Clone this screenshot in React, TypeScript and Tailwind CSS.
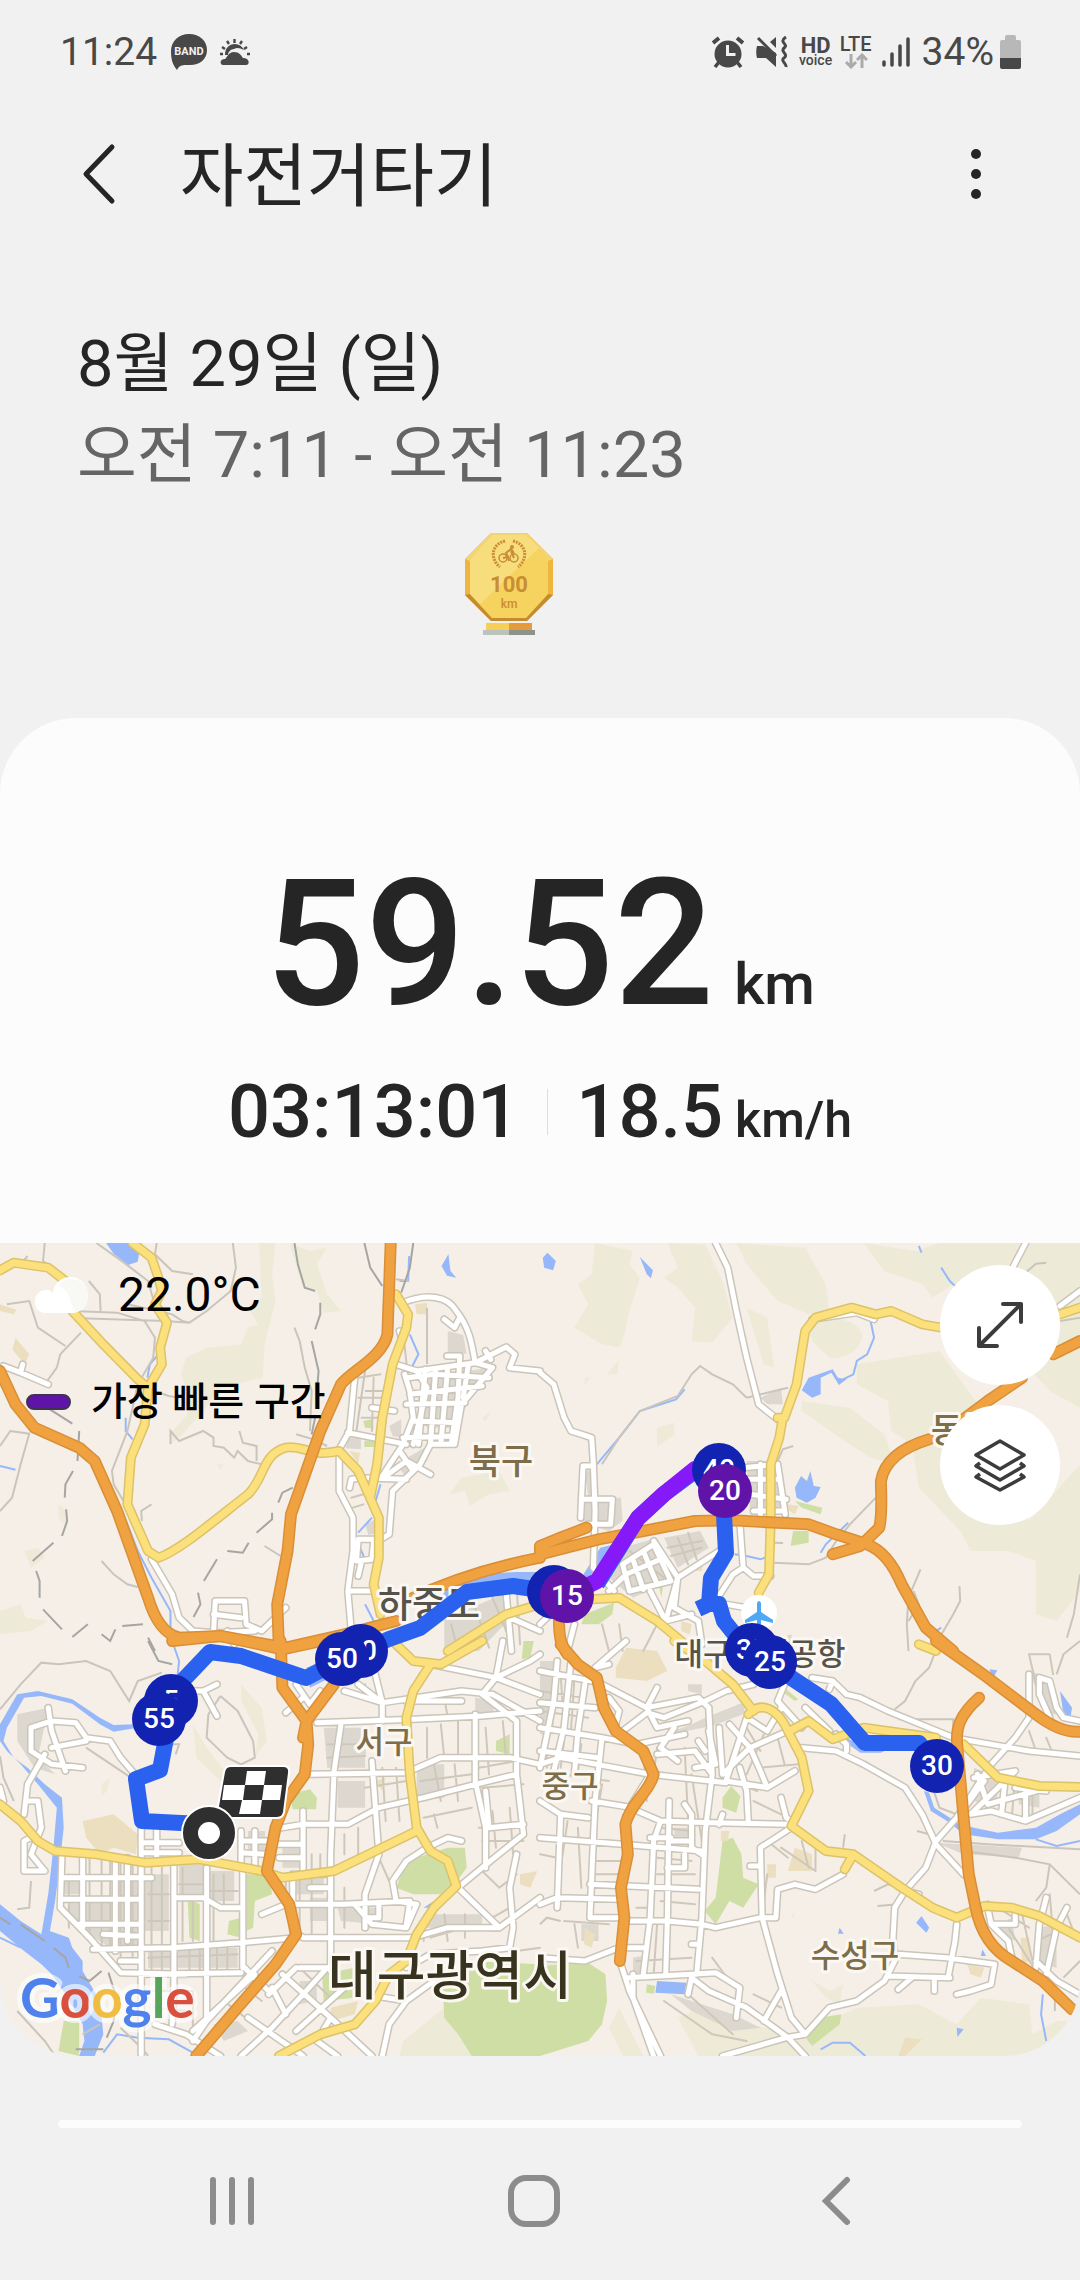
import { useState } from 'react';

type Tile = {
  id: string;
  transform: string;
  hills: string;
  parks: string;
  blocks: string;
  sand: string;
  water: string;
  streams: string;
  trails: string;
  lanes: string;
  streets: string;
  arterials: string;
  highways: string;
  borders: string;
};

const BLUE = '#1223b1';
const PURPLE = '#5f13a8';

// Map geometry, one entry per tile
const tiles: Tile[] = [
  {
    id: 'nw',
    transform: 'translate(0 -12) scale(0.34439 0.33333)',
    hills:
      'M752 36L800 36L790 130L800 210L770 330L762 440L640 470L590 540L530 610L495 640L500 600L545 550L550 490L525 430L540 380L600 350L700 340L720 290L750 280L720 230L760 200Z M840 36L900 60L950 50L920 100L950 190L990 240L940 245L920 180L880 170Z M1340 740L1450 720L1480 780L1420 790L1365 825L1350 780L1305 790Z M70 960L110 950L130 980L90 1010Z M0 1140L60 1120L75 1160L140 1170L90 1200L0 1210Z M170 820L195 840L195 890L170 860Z M1400 560L1428 540L1410 572Z M630 700L650 700L640 716Z',
    parks: 'M1055 570L1080 565L1085 592L1060 590Z M1058 630L1090 626L1090 648L1058 648Z M1340 468L1358 465L1358 486L1342 488Z',
    blocks:
      'M1300 300L1345 312L1355 368L1300 362Z M1230 440L1420 410L1370 480L1330 590L1240 590L1210 520Z M1010 620L1048 620L1048 655L1004 652Z M1130 585L1165 565L1165 620L1140 615Z M1060 880L1100 860L1100 905L1070 912Z M1150 700L1250 640L1240 690L1180 740Z M1290 1165L1460 1090L1475 1170L1390 1260L1290 1260Z M1370 385L1430 378L1420 402L1380 404Z',
    sand: 'M0 220L48 236L40 250L0 240Z M45 320L85 370L72 400L36 356Z M1205 220L1240 215L1240 250L1210 250Z M1015 660L1045 665L1040 700Z M1180 1095L1225 1090L1220 1120L1185 1125Z',
    water:
      'M308 36L390 36L405 60L400 92L372 102L330 68Z M1302 70L1308 120L1325 140L1298 134L1282 105Z M1230 1090C1330 1035 1450 1018 1568 1024L1568 1060L1400 1060L1290 1120Z',
    streams:
      'M460 370L435 400L428 440M365 560L365 600L385 625M0 705L45 716M355 840L400 960L440 1040L495 1140L495 1190M1188 75L1185 150L1160 150M1190 310L1215 370L1190 420M1105 760L1085 830M1080 860L1040 905M1045 950L1062 990M1060 1120L1085 1170',
    trails:
      'M130 36L125 90L165 120L210 150M455 36L450 70L500 120L560 130M676 36L685 110L670 180L600 240L550 275L530 270L500 250L370 220M235 262L480 270L550 275M210 240L340 245L420 270L450 320L445 380L400 460L370 600L325 720L330 760L370 830M20 220L85 210L110 290L190 345M235 305L175 370L165 410L130 460M280 36L360 95L430 150L460 260M258 150L290 190L292 240M0 645L30 600L85 608L60 700L35 800L0 840M495 640L495 600L520 630L590 600L620 620L620 645L650 650L680 680L690 660L720 690L760 700M695 600L705 635L745 645L745 690M420 470L490 495L520 500M855 290L870 330L885 410L905 480L900 600M295 990L330 1030L370 1060L400 1068M768 945L815 975M412 870L410 840L440 820M1240 230L1240 400M1060 420L1035 600M1060 480L1120 480M860 610L910 625L950 645M1186 150L1150 145M0 120L60 100L80 75',
    lanes:
      'M1040 440L1105 430M1040 500L1110 500M1050 560L1110 560M1085 440L1080 600M1020 800L1055 790M1025 830L1055 820M1170 300L1185 440M1500 1060L1510 1240M1380 1130L1420 1250M1310 1180L1330 1260M1430 1100L1470 1200',
    streets:
      'M10 405L60 425L140 460M60 425L66 400M1170 215C1240 185 1300 195 1325 240C1370 300 1370 350 1380 395L1470 348L1495 370L1480 410L1568 420M1380 395L1430 410L1340 520L1320 640L1250 640L1220 700L1140 780L1130 910L1105 925L1040 925M1150 400L1210 420L1380 395M1290 265L1320 290L1335 260M1410 360L1425 385M1175 430L1190 480L1200 560L1170 640L1110 735M1210 420L1240 470L1220 560L1200 640M1190 490L1400 465M1180 520L1350 515M1200 570L1330 575M1170 620L1320 615M1235 415L1215 640M1265 415L1250 640M1300 410L1280 640M1298 375L1335 375L1330 500L1310 640M1360 400L1345 500M1185 440L1260 430L1420 440M1030 440L1015 600L985 655L985 780L1025 860L1025 960L1010 1080L1020 1200M1010 605L1180 640M1080 530L1145 540M1040 740L1180 745M1120 735L1180 690L1250 730M1160 660L1200 720M1040 925L1035 990L1080 985L1085 930M1010 1080L1080 1080M1055 740L1020 745L1015 770M440 985L500 1090L520 1160L560 1200M560 1200L620 1205L625 1110L710 1110L715 1180L760 1200L830 1130M620 1150L700 1160M625 1205L740 1200M660 1200L680 1240M1050 990L1040 1035M1160 300L1165 320M1470 1090L1485 1260M1480 1160L1568 1200',
    arterials:
      'M0 118L40 95L140 110L190 150L210 240L300 340L400 445L430 470M385 36L440 80L460 140L470 180L450 220L485 275L465 350L470 400L430 470L420 580L380 680L370 820L430 960L460 980C520 960 620 870 720 790C770 740 760 670 830 650C880 640 900 680 985 660L1040 720L1100 860L1100 980L1085 1060L1105 1150M1150 190L1185 250L1180 290L1140 400L1110 560L1095 700L1075 800M1568 1120L1470 1150L1300 1260',
    highways:
      'M1135 20L1125 310C1110 380 1020 420 990 460L930 600L845 850L835 960L805 1120L810 1250M0 420L45 520L100 590L230 650L275 690L340 840L430 1100C450 1170 480 1210 520 1220L640 1215L830 1250L1000 1210L1150 1170M1180 1110C1300 1050 1420 1010 1568 980',
    borders:
      'M855 36L865 100L885 170L915 180M930 215L930 250L915 295M905 330L925 420L922 460M915 560L905 610M1058 36L1075 110L1110 165M1200 36L1190 110L1165 185M230 600L225 690M212 720L190 760L188 800M192 835L195 870L180 915M155 935L95 990M105 1020L115 1050L115 1100M125 1135L180 1195M210 1218L255 1180M295 1210L320 1230L335 1195M355 1185L415 1180M850 770L820 785L808 815M790 845L790 865L745 905M722 935L705 965L660 960M630 985L592 1050M575 1085L582 1120L562 1158M145 535L210 578M430 1220L450 1260',
  },
  {
    id: 'ne',
    transform: 'translate(540 -12) scale(0.34439 0.33333)',
    hills:
      'M160 36L270 60L260 100L290 140L260 240L245 310L230 350L180 340L100 290L140 220L110 160L150 130Z M370 36L480 40L530 150L560 260L500 335L440 330L450 230L400 170L360 140L400 110Z M570 36L770 50L830 160L840 240L780 250L690 210L600 100Z M770 270C830 250 920 260 935 310C940 360 870 390 840 380L790 330Z M600 230L660 260L680 410L650 400L620 300Z M760 510L900 530L1000 610L1030 700L960 680L870 620L760 540Z M920 400L1160 360L1300 560L1420 870L1568 700L1568 1080L1500 1170L1440 1150L1440 990L1360 960L1250 960L1220 900L1100 770L1080 640L1020 600L1010 510L920 460Z M940 36L1090 60L1160 36L1568 36L1568 530L1480 480L1200 160L1140 200L1110 160L1000 120Z M340 590L390 575L390 610L340 648Z M195 430L230 385L225 430Z M130 440L145 440L130 466Z',
    parks: 'M740 810L820 830L815 850L760 830Z M735 900L780 900L780 935L728 945Z M130 1150L215 1115L210 1150L170 1180L120 1180Z M345 1060L358 1060L352 1100Z',
    blocks:
      'M130 720L160 715L165 800L140 800Z M110 800L235 800L240 870L200 900L110 870Z M360 920L465 900L490 950L400 1010Z M240 950L340 920L400 1040L270 1100L200 1040Z M600 690L690 690L715 840L610 850Z M640 500L700 470L705 520L660 520Z M700 1220L730 1210L735 1260L700 1260Z',
    sand: 'M718 820L752 824L740 850L715 835Z M440 1000L475 990L470 1020L440 1020Z M410 1170L440 1180L435 1210L410 1200Z',
    water:
      'M8 80L22 65L46 90L38 118L12 110Z M290 78L328 118L322 142L310 130Z M780 440L850 415L865 440L890 445L868 462L846 425L815 440L815 490L790 500L760 478Z M740 770L758 735L775 750L785 720L795 765L815 768L800 800L775 815L745 800Z M175 950L215 940L200 975L140 1040L120 1040Z',
    streams:
      'M960 270L970 320L950 370L920 390L910 430L880 445M420 475L395 505L290 540L230 620L165 700M1165 110L1190 150L1205 165M1100 45L1108 65M895 875L830 940L815 965M565 970L600 975L640 985L680 970',
    trails:
      'M0 430M600 500L560 460L500 430L465 405L440 430L400 495L290 540L230 620L180 700M600 500L720 470M690 690L705 655L735 645M975 800L900 880L860 930L830 980L780 1000L680 995M1070 1260L1065 1180L1070 1100L1105 1015M1070 1170L1100 1120L1085 1080M1568 1030L1550 1150L1530 1220M1160 1220L1200 1150L1220 1110L1218 1065M680 935L706 936M1405 130L1440 98L1470 95M1510 270L1568 260',
    lanes:
      'M370 950L470 930M380 975L470 950M400 920L430 1000M430 905L455 985M260 960L360 1040M250 1040L350 990M180 1180L200 1260M230 1180L240 1260M340 1180L300 1260',
    streets:
      'M510 36L545 110L570 240L600 380L635 520L690 565M0 425L40 460L70 560L90 600L150 620L155 700L160 840L155 1010L215 1080M125 705L155 705M125 705L118 860M120 805L210 805L205 880L140 880M590 710L690 700M600 745L690 745M610 790L715 805M620 840L700 840M640 700L640 850M690 700L712 850M580 870L590 1010L560 1030L510 1110M590 1010L620 1035L670 1035M240 1000L330 940L380 1050L260 1080L240 1000M270 985L300 1075M300 960L340 1060M250 1030L350 985M330 930L400 1040L520 960M400 1040L390 1130L460 1170L470 1240M200 1080L240 1040M320 1080L365 1170L400 1040M365 1170L440 1150M540 1120L600 1130M100 1180L80 1260M0 1180L60 1120M1375 105L1410 36M1510 225L1568 180M790 265L920 245L970 265',
    arterials:
      'M150 1105L230 1100L340 1170L410 1230L440 1260M690 560L710 560L745 460L770 300L800 260L905 230L975 250L1020 240L1110 280L1165 290M705 560L695 620L670 700L670 860L665 1030L635 1085M1510 250L1568 230M1150 1260L1100 1240',
    highways:
      'M0 970L170 925L300 900L450 870L560 868L780 880L860 910L950 940C1000 960 1030 1010 1050 1060L1120 1190L1200 1260M0 945L60 920L135 890M0 980L0 945M850 970L930 945L985 890C995 850 990 790 990 750C1000 690 1050 650 1130 625M1210 580L1300 510L1400 440M1490 370L1568 330M55 1160C55 1220 60 1240 80 1270',
    borders: '',
  },
  {
    id: 'sw',
    transform: 'translate(0 398) scale(0.34439 0.33333)',
    hills:
      'M700 130L760 200L775 300L740 350L750 280L700 180Z M560 250L600 320L660 400L640 420L570 350Z M1290 1100L1170 1200L1160 1245L1568 1245L1568 1000Z M295 430L320 410L310 450L295 466Z',
    parks:
      'M1285 1020L1360 960L1568 970L1568 1245L1370 1245L1330 1180L1290 1130Z M1180 660L1300 620L1350 620L1355 680L1300 760L1200 760L1150 740Z M715 700L780 700L790 760L740 780L735 860L715 870Z M545 770L580 790L580 900L550 890Z M840 460L900 445L920 470L918 505L850 505Z M665 840L700 830L700 890L660 880Z M935 1000L1030 980L1030 1070L940 1080Z M185 1140L230 1140L230 1245L170 1230Z M1440 300L1480 280L1480 340L1440 330Z M1015 325L1062 325L1062 345L1015 345Z M1520 0L1550 0L1540 50L1515 55Z',
    blocks:
      'M50 220L140 200L110 350L160 400L100 380L50 300Z M180 700L230 700L230 760L180 760Z M340 720L400 720L400 770L340 770Z M420 700L490 700L490 870L420 870Z M520 670L590 670L590 760L520 760Z M610 690L680 690L680 780L610 780Z M430 930L690 920L690 980L430 980Z M200 780L400 780L400 920L320 920L200 840Z M720 570L770 570L770 630L720 630Z M820 600L880 600L880 680L820 680Z M940 260L1060 260L1060 380L950 380Z M900 770L950 770L950 840L900 840Z M980 800L1100 800L1100 850L990 840Z M1210 370L1290 370L1290 470L1210 480Z M620 1150L690 1140L720 1170L650 1200Z M870 1020L920 1020L920 1080L870 1090Z M980 420L1060 420L1060 500L980 500Z M1380 170L1440 180L1430 220L1380 215Z M1230 820L1400 820L1400 860L1230 860Z M860 700L940 700L940 760L860 760Z',
    sand: 'M240 540L330 520L400 580L395 640L330 620L290 640L250 590Z M960 1100L1040 1080L1030 1120L960 1140Z M1510 700L1560 690L1540 740L1510 730Z M1090 420L1120 410L1110 450Z',
    water:
      'M0 300L0 250L50 160L110 150L210 175L290 230L330 252L390 250L390 262L330 272L290 250L210 188L120 165L70 170L20 260L10 300L40 350L80 380L130 430L180 470L185 560L170 700L160 780L145 870L200 890L210 920L240 960L240 990L290 1080L300 1180L275 1245L230 1245L245 1200L240 1150L190 1060L150 1000L120 970L70 930L0 870L0 790L60 840L120 880L140 760L155 620L165 500L110 430L60 370L20 330Z M1230 800L1260 780L1262 800Z M1000 30L1040 70L900 140L890 80Z',
    streams: 'M0 890L60 920M500 0L520 60L515 110M300 1235L340 1180L400 1190L490 1195L560 1235M635 1100L570 1180',
    trails:
      'M0 205L60 130L120 65L170 70L250 60L320 90L375 180L400 120L470 95M640 165L605 220L600 290L660 350L700 370L740 350L735 300L690 210L640 165M0 345L10 410L40 480M250 320L380 410M510 340L520 310L500 310M90 720L85 800L50 805M350 1160L410 1220L430 1245M50 1110L130 1200L160 1245M240 1180L290 1150',
    lanes:
      'M200 700L200 860M260 650L260 900M295 650L295 920M320 650L320 920M350 650L350 960M385 650L385 960M440 680L440 1000M470 680L470 1000M530 680L530 900M560 780L560 900M620 700L620 900M650 700L650 790M430 760L490 760M430 840L490 840M520 730L590 730M610 750L690 750M430 950L690 940M550 930L550 990M580 930L580 990M630 920L630 990M660 920L660 990M830 700L830 800M870 720L870 880M905 640L905 880M930 640L930 700M950 310L1060 310M950 350L1060 345M1110 380L1120 540M1150 380L1160 540M1060 440L1180 420M1220 420L1370 400M1260 370L1280 480M1320 370L1330 480M1230 530L1370 500M1260 520L1270 560M1000 580L1000 640M1040 560L1040 640M1070 800L1070 850M1000 740L1000 860M1100 650L1130 720M1240 260L1240 350M1280 250L1290 350M1330 240L1330 350M1410 260L1420 400M1460 240L1470 360M1390 380L1500 360M1400 440L1520 430M1430 510L1440 620M1480 500L1490 640M1390 560L1520 560M1400 600L1520 600M1290 170L1300 230M1060 130L1060 170M1230 840L1230 900M1290 820L1300 900M1350 820L1350 890M1400 690L1450 740L1500 700M1430 830L1480 800M1500 930L1568 920M1250 890L1350 860L1450 870M700 1030L760 1080M650 1080L750 1160M820 1000L930 1110M870 980L960 1070M560 1050L560 1170M600 1000L600 1100M440 1050L560 1050M450 1100L540 1110',
    streets:
      'M90 260L150 240L220 245L250 290L320 300L350 350L400 410M90 260L90 330L150 370L240 380M140 200L150 270L190 390M150 320L250 300M130 340L80 430L70 520M75 480L110 480L120 560L90 640L130 690L70 690L70 600L110 580M0 440L10 480M560 150L590 150L630 225M590 150L630 130M180 640L175 800L260 890L350 995L540 1000M240 640L240 860M335 650L335 930M370 650L370 900M410 560L410 1240M455 560L455 660M410 605L520 605M410 635L520 635M505 660L505 1040L500 1150M600 680L600 1140M705 690L705 980M185 710L440 710M180 775L410 775M230 850L410 850M300 880L400 885M270 925L500 920L700 905L860 890M350 960L410 960M510 770L590 770L640 800L705 800M410 1000L700 995M700 600L780 600M700 635L770 640M700 570L700 660M740 570L740 670M760 820L830 790L1000 790L1190 780L1180 850M850 800L850 870L880 890L1200 890L1300 860L1450 860L1568 770M870 980L950 980M850 700L850 790M880 510L880 700M820 560L880 550L1010 550L1100 500L1230 470L1380 430L1500 400M800 610L880 610M810 650L880 650M960 640L960 990M900 740L960 740M990 250L970 390L960 640M860 700L960 700M900 400L1180 395L1280 350L1480 350L1568 370M920 245L1200 235L1400 225L1568 210M1080 360L1090 500L1100 640L1060 760L1060 860M1060 830L1100 830L1100 790M1030 790L1080 850L1180 860L1210 790L1150 780L1140 720L1180 660L1240 620L1300 590L1340 600M1040 130L1110 185L1340 150L1430 160L1568 240M1080 60L1110 185L1110 240M1000 150L1110 185M1250 70L1440 110L1400 160L1500 240L1500 400L1520 580L1400 680L1330 740L1450 860M1440 110L1540 60L1568 40M1380 220L1380 420L1410 560L1410 680M1500 640L1480 740L1490 860L1480 920L1400 930L1250 940L1180 980M1460 0L1440 110L1568 160M1410 450L1420 560L1520 550M860 130L900 190L930 150M830 215L880 170M790 930L700 1030L600 1140L560 1200M740 1000L560 1170M820 1000L960 1130L1080 1245M950 980L880 1060L790 1160L700 1245M780 1060L860 980M860 1170L1000 1040M720 1130L880 1245M830 1120L790 1040M960 1130L920 1200L980 1245M1060 1060L1180 1080L1130 1150L1110 1245M1180 1080L1260 1020M1180 180L1340 180M450 1150L540 1180L640 1245M710 980L780 1050',
    arterials:
      'M1150 10L1200 60L1280 70L1400 0M1250 70L1200 150L1180 230L1190 400L1210 560L1250 630L1300 660L1325 735L1260 800L1210 880L1180 960L1130 1000L1090 1080L1030 1150L930 1180L810 1245M0 490L60 540L110 600L160 630L280 640L420 665L580 655L760 690L820 710L970 690L1210 570',
    highways:
      'M500 0L640 -15L820 25L1000 -15M815 0L820 140L890 240L895 310L885 400L830 480L800 560L775 690L840 790L860 880L800 970L690 1100L570 1245M970 130L890 240L880 290',
    borders: 'M0 830L30 850M60 850L130 900M155 920L190 950L200 980M230 1005L260 1020L295 990M315 995L335 1060M335 1090L330 1140L310 1190M220 1225L300 1225M430 0L460 60L500 70',
  },
  {
    id: 'se',
    transform: 'translate(540 398) scale(0.34439 0.33333)',
    hills:
      'M400 1130L470 1100L600 1150L760 1180L920 1100L1100 1090L1210 1150L1280 1070L1420 1090L1430 1180L1500 1140L1568 1140L1568 1245L240 1245L200 1160L230 1100L300 1245L460 1245Z M0 960L60 960L0 1020Z M785 1015L840 1050L880 1030L870 1090L830 1070Z M730 820L740 815L735 835Z',
    parks:
      'M0 975L140 965L190 1000L195 1080L180 1150L140 1200L0 1245Z M530 470L555 435L582 465L570 515L530 500Z M530 600L560 590L585 640L590 710L635 730L590 800L550 780L510 850L478 810L510 770Z M810 1130L875 1120L870 1150L790 1215L775 1195Z M710 140L750 175L740 180L700 150Z M310 1030L335 1035L330 1058L308 1055Z',
    blocks:
      'M380 1060L440 1080L560 1120L640 1160L560 1170L440 1110Z M270 950L295 945L290 1005L270 1005Z M480 230L600 180L590 220L500 255L350 285L440 250Z M1150 605L1400 620L1390 650L1230 640Z M1260 380L1340 410L1320 500L1260 480Z M1330 850L1370 830L1380 900L1340 880Z M1450 860L1500 850L1500 980L1450 970Z M0 60L40 60L40 280L0 280Z M1420 90L1480 110L1500 220L1470 220Z M120 850L170 850L170 900L120 900Z M430 130L470 130L470 160L430 150Z M1390 440L1450 440L1450 500L1390 490Z M390 560L430 560L430 610L390 610Z',
    sand: 'M220 80L250 20L340 30L370 90L310 120L220 110Z M740 620L790 640L790 690L720 690Z M1060 1190L1110 1195L1060 1245L1040 1245Z M525 570L550 570L545 600L525 600Z M1240 970L1290 980L1280 1010L1250 1000Z M130 860L160 880L150 920L128 910Z M1395 890L1420 890L1425 960L1400 970Z M660 670L685 670L685 710L660 710Z',
    water:
      'M340 1020L425 1025L420 1060L335 1055Z M1108 825L1130 860L1122 875L1092 845Z M870 860L882 878L865 878Z M1210 1160L1230 1165L1212 1188Z M1510 150L1545 200L1540 230L1520 220Z M1305 85L1328 88L1315 112Z M1115 450L1130 455L1145 500L1190 530L1210 545L1260 560L1330 575L1440 560L1510 520L1568 490L1568 520L1500 570L1440 595L1330 595L1230 580L1190 545L1135 510Z M890 290L960 330L1010 325L990 335L930 335L895 310Z M830 195L880 240L900 270L850 225Z M1285 925L1295 945L1280 945Z',
    streams: 'M815 1225L850 1205L900 1205L945 1245M1440 595L1500 615L1568 600M1460 1060L1455 1120L1470 1200M1150 -30L1165 -40',
    trails:
      'M1160 0L1130 80L1090 120L1060 180L1030 205M1568 760L1480 670L1380 650L1230 630M1170 600L1300 610L1568 625M1480 670L1470 740L1440 780M1568 0L1520 40L1500 100M880 620L885 580M970 750L1010 730L1050 740M980 795L1040 790M1095 570L1130 580M1495 1060L1495 1110M1520 1010L1568 960M1040 235L1200 235L1200 290M1140 440L1160 500L1210 520M0 850L20 830L60 840',
    lanes:
      'M60 100L70 260M100 110L90 270M0 150L130 170M0 210L140 230M20 310L20 380M70 300L60 380M120 310L110 390M60 400L200 420M180 430L160 560M80 540L60 680M110 560L120 740M0 640L50 650M160 660L240 660M160 700L240 700M70 840L200 850M100 850L110 920M300 330L310 480M340 320L330 400M420 320L430 540M440 400L470 600M340 650L440 660M340 700L450 700M350 560L440 570M350 780L450 790M280 800L330 800M280 960L440 950M340 850L330 1000M560 420L630 450M600 260L640 330M650 280L600 400M690 290L710 370M640 380L750 370M620 480L700 520M660 600L720 650M700 620L800 690L800 620M760 600L780 680M660 700L650 780M360 1080L500 1180L600 1200M430 1060L560 1180M620 1060L700 1100M500 950L550 1020M1420 40L1440 130M1420 40L1480 40L1490 100M1300 780L1420 860M1360 860L1440 990M1400 820L1430 960M1480 760L1490 880M1530 820L1560 900M1440 900L1530 860M1250 600L1250 660M1380 400L1370 530M1430 430L1430 520M1470 290L1490 340M1420 270L1440 330',
    streets:
      'M0 90L150 120M0 185L160 200M0 260L180 290L280 310L420 280M50 60L40 180L0 380M90 60L70 260L40 390M130 130L110 270L100 400M0 370L60 350L320 400L540 425M0 330L170 350M180 290L160 480L145 830L230 830M0 480L60 520L50 800M60 520L140 530M0 590L240 610L470 630M145 730L460 745M0 790L50 770L230 775M150 480L270 500M320 400L260 500L350 540L500 545L720 550M350 540L330 600L320 830L300 1000M375 480L370 830L365 1000M420 490L440 520L440 620L470 640M490 200L500 400L480 570L470 830L455 1000M320 590L380 590M370 680L420 680L420 640M380 600L430 600M240 840L370 840L470 850L510 860L640 830L685 830L690 745L740 730L800 745L880 700M645 830L640 620L730 560M610 675L640 675M645 830L690 1000L730 1130L770 1180L715 1190L530 1245M240 270L310 215L360 230L480 180L540 150L620 130M200 70L160 80L250 0M180 130L310 200L460 170L490 200M310 200L340 140M200 170L230 210L220 250M310 200L340 260L430 240M390 260L350 320L400 360M340 340L450 330L500 400M520 260L530 400L610 320L640 390L660 440M490 270L510 370L450 380M550 250L610 320L720 270M460 300L480 330M540 420L600 230L660 270L700 200M580 380L600 450L605 545M540 420L660 440L740 390M700 470L715 530L730 540M530 520L520 550M760 320L860 330L940 370L1060 440L1110 520L1150 610L1230 700M860 280L890 310L890 330M710 130L690 180L760 260M770 200L840 270M790 110L850 120L890 160L930 170L1010 210L1200 290L1420 330L1568 345M850 120L840 145M1420 100L1420 230L1380 290L1310 370L1210 530L1150 600L1120 680L1060 750L1030 800L1025 890L1030 960L1000 1020L920 1080L840 1100L770 1180M1060 750L1100 760M1450 110L1480 120L1500 200L1520 230L1568 240M1450 110L1450 160L1480 230M1260 410L1380 390L1250 520L1310 510L1410 540L1568 470M1270 400L1300 490L1440 450M1290 420L1240 490M1350 420L1340 520M1410 440L1410 530M1380 440L1470 450M1210 850L1205 900L1185 1010M1040 940L1180 950L1320 970L1310 1030L1250 1050L1210 1060M1010 1005L1190 1010M1145 1010L1145 1050M1080 1010L1040 1045M1300 800L1310 850L1360 900L1370 950M1310 850L1380 850L1380 820M1470 770L1450 850L1440 980M1530 800L1500 860L1470 1000M1440 960L1500 1020L1568 1060M0 950L130 960L230 920L300 920M250 1010L440 1000L510 995L580 1040L570 1130M430 1060L440 1010L490 1050L600 1100L720 1190L770 1245M650 1140L700 1050M235 970L260 1050L350 1245M270 1000L270 1070L330 1245M440 910L460 910',
    arterials:
      'M390 0L480 60L560 130L620 210M605 220C640 180 690 200 720 270L760 350L780 450L730 555L830 630L910 640L1050 740L1140 800L1210 830L1290 795L1370 800L1450 825L1568 890M725 270L780 240L850 295L940 260L1150 290M1230 310L1330 410L1450 435L1568 438M910 640L885 685',
    highways:
      'M60 10L110 70L165 110L185 200L220 270L300 330L330 400C320 450 260 490 248 550L255 640L235 740L245 830L232 960M1150 0L1300 110L1440 220C1490 260 1530 275 1568 272M1275 170C1220 220 1205 260 1212 320L1230 530L1245 700L1265 800C1280 880 1320 930 1370 960L1460 1020L1545 1105',
    borders: '',
  },
];

const districtLabels = [
  { text: '북구', x: 501, y: 231, size: 35, color: '#7d6d49' },
  { text: '동구', x: 963, y: 200, size: 35, color: '#7d6d49' },
  { text: '하중도', x: 429, y: 375, size: 37, color: '#57524a' },
  { text: '대구국제공항', x: 760, y: 422, size: 31, color: '#57524a' },
  { text: '서구', x: 384, y: 510, size: 31, color: '#7d6d49' },
  { text: '중구', x: 570, y: 554, size: 31, color: '#7d6d49' },
  { text: '수성구', x: 855, y: 724, size: 32, color: '#7d6d49' },
  { text: '대구광역시', x: 450, y: 752, size: 53, color: '#38331f' },
];

// The marker without a distance is covered by the 15 km one
const distancePins = [
  { km: '5', x: 171, y: 458, color: BLUE },
  { km: '55', x: 159, y: 476, color: BLUE },
  { km: '10', x: 361, y: 408, color: BLUE },
  { km: '50', x: 342, y: 416, color: BLUE },
  { km: '', x: 554, y: 349, color: BLUE },
  { km: '15', x: 567, y: 353, color: PURPLE },
  { km: '40', x: 719, y: 227, color: BLUE },
  { km: '20', x: 725, y: 248, color: PURPLE },
  { km: '35', x: 752, y: 407, color: BLUE },
  { km: '25', x: 770, y: 419, color: BLUE },
  { km: '30', x: 937, y: 523, color: BLUE },
];

const logoLetters = [
  { char: 'G', color: '#4f82ec' },
  { char: 'o', color: '#d9503f' },
  { char: 'o', color: '#f0bc42' },
  { char: 'g', color: '#4f82ec' },
  { char: 'l', color: '#55a65a' },
  { char: 'e', color: '#d9503f' },
];

const roadLayers = [
  { key: 'lanes', casing: '#cfc8ba', fill: '#cfc8ba', outer: 2, inner: 0 },
  { key: 'streets', casing: '#cbc5b9', fill: '#ffffff', outer: 8, inner: 5 },
  { key: 'arterials', casing: '#dcc26a', fill: '#fbe07b', outer: 10, inner: 7 },
  { key: 'highways', casing: '#d98f37', fill: '#f0a140', outer: 12, inner: 9 },
] as const;

function StatusBar() {
  return (
    <header className="flex h-[104px] items-center justify-between pl-15 pr-[59px] text-[#484848]">
      <div className="flex items-center">
        <span className="text-[39px] leading-none">11:24</span>
        <svg className="ml-3.5 size-9" viewBox="0 0 36 36" aria-label="BAND">
          <path d="M18 0c11 0 18 7 18 16 0 9-7 15-17 15-6 0-10-1-13 5C1 30 0 24 0 17 0 7 8 0 18 0Z" fill="currentColor" />
          <text x="18" y="21" textAnchor="middle" fontSize="11" fontWeight="700" fill="#f1f1f1">BAND</text>
        </svg>
        <svg className="ml-3 h-8 w-8" viewBox="0 0 32 32" fill="none" stroke="currentColor" strokeWidth="2.4" aria-label="날씨">
          <path d="M15.500 3v4M8 5l2 3M23 5l-2 3M3 11l3 2M28 11l-3 2M1 18h3M28 18h3" />
          <path d="M6 19c0-7 4-11 10-11 4 0 7 2 9 6-4-2-7-3-10-1-3 0-6 3-6 6Z" fill="currentColor" stroke="none" />
          <path d="M4 29c-3 0-4-6 2-6 2-1 3-7 9-7 5 0 7 3 9 6 7 0 7 7 3 7Z" fill="currentColor" stroke="none" />
        </svg>
      </div>

      <div className="flex items-center">
        <svg className="h-8 w-8" viewBox="0 0 32 32" fill="none" stroke="currentColor" aria-label="알람">
          <circle cx="16" cy="18" r="13.500" fill="currentColor" stroke="none" />
          <path d="M1 7l6-5M31 7l-6-5" strokeWidth="4" />
          <path d="M7 26l-4 5M25 26l4 5" strokeWidth="3.500" />
          <path d="M15.500 9v9.500h8" stroke="#f1f1f1" strokeWidth="3" />
        </svg>
        <svg className="ml-3 h-8 w-8" viewBox="0 0 32 32" fill="none" stroke="currentColor" aria-label="진동">
          <path d="M1 10h6l13 7v14L10 22H1c-1-3-1-9 0-12Z" fill="currentColor" stroke="none" />
          <path d="M14 6l6-5v11Z" fill="currentColor" stroke="none" />
          <path d="M2 2l18 18" strokeWidth="3" />
          <path d="M30 1c-8 5 2 7-1 10-6 5 3 6 0 10-6 4 2 6 1 10" strokeWidth="3" />
        </svg>
        <div className="ml-3 flex w-8 flex-col items-center">
          <span className="text-[22px] font-bold leading-[17px]">HD</span>
          <span className="text-[14px] font-medium leading-[13px]">voice</span>
        </div>
        <div className="ml-2 flex w-8 flex-col items-center">
          <span className="text-[20px] font-medium leading-[18px]">LTE</span>
          <svg className="h-4 w-6" viewBox="0 0 24 16" fill="none" stroke="#ababab" strokeWidth="3">
            <path d="M7 1v12M2 9l5 5 5-5M18 15V3M13 7l5-5 5 5" />
          </svg>
        </div>
        <svg className="ml-2 h-8 w-8" viewBox="0 0 32 32" fill="none" stroke="currentColor" strokeWidth="3.500" strokeLinecap="round" aria-label="신호">
          <path d="M4 26v3M12 18v11M20 10v19M28 3v26" />
        </svg>
        <span className="ml-2.5 text-[39px] leading-none">34%</span>
        <svg className="ml-1.5 h-[34px] w-[21px]" viewBox="0 0 21 34" aria-label="배터리">
          <path d="M5 5V2q0-2 2-2h7q2 0 2 2v3h3q2 0 2 2v17H0V7q0-2 2-2Z" fill="#b8b8b8" />
          <path d="M0 23h21v9q0 2-2 2H2q-2 0-2-2Z" fill="#484848" />
        </svg>
      </div>
    </header>
  );
}

function TitleBar() {
  return (
    <div className="flex h-[140px] items-center pl-[77px] pr-[99px]">
      <button type="button" aria-label="뒤로" className="text-[#252525]">
        <svg className="h-16 w-10" viewBox="0 0 40 64" fill="none" stroke="currentColor" strokeWidth="5" strokeLinecap="round" strokeLinejoin="round">
          <path d="M35 5L9 32l26 27" />
        </svg>
      </button>
      <h1 className="ml-[63px] pt-2 text-[69px] leading-[100px] text-[#252525]">자전거타기</h1>
      <button type="button" aria-label="더보기" className="ml-auto flex flex-col gap-[10px]">
        <span className="size-[10px] rounded-full bg-[#252525]" />
        <span className="size-[10px] rounded-full bg-[#252525]" />
        <span className="size-[10px] rounded-full bg-[#252525]" />
      </button>
    </div>
  );
}

function Medal() {
  return (
    <svg className="mx-auto h-[102px] w-[88px] shrink-0" viewBox="0 0 88 102" aria-label="100 km">
      <path d="M26 0h36l26 26v36L62 88H26L0 62V26Z" fill="#efb53f" />
      <path d="M26 0h36l26 26-5 2L61 2H27L5 28l-5-2Z" fill="#f3d377" />
      <path d="M0 62l26 26h36l26-26-5-1-22 24H27L5 61Z" fill="#c48c2c" />
      <path d="M27 2h34l22 25v34L61 85H27L5 61V27Z" fill="#f6d25f" />
      <path d="M27 2h34l13 13L15 71 5 61V27Z" fill="#f8dd7d" />
      <g fill="none" stroke="#c98d33" strokeWidth="1.500">
        <circle cx="38" cy="25" r="4" />
        <circle cx="49" cy="25" r="4" />
        <path d="M38 25l5-1 1 4M43 24l-2-4 5-4 3 4M49 25l-3-7" strokeWidth="2" />
        <path d="M40 8C27 11 24 25 35 34M48 8c13 3 16 17 5 26" strokeWidth="3" strokeDasharray="2 1" />
      </g>
      <circle cx="47" cy="14" r="2" fill="#c98d33" />
      <text x="44" y="59" textAnchor="middle" fontSize="22" fontWeight="700" fill="#c98d33">100</text>
      <text x="44" y="75" textAnchor="middle" fontSize="12" fontWeight="500" fill="#c98d33">km</text>
      <path d="M21 90h23v8H21Z" fill="#f5cf58" />
      <path d="M44 90h23v8H44Z" fill="#e59b3c" />
      <path d="M18 97h26v5H18Z" fill="#bcc3bd" />
      <path d="M44 97h26v5H44Z" fill="#8a938c" />
    </svg>
  );
}

function RouteMap() {
  return (
    <svg className="block h-auto w-full" viewBox="0 0 1080 813" fill="none" role="img" aria-label="운동 경로 지도">
      <rect width="1080" height="813" fill="#f5efe8" />
      {/* Land cover */}
      {tiles.map((tile) => (
        <g key={tile.id} transform={tile.transform}>
          <path d={tile.hills} fill="#edebd8" />
          <path d={tile.parks} fill="#cfdea5" />
          <path d={tile.blocks} fill="#dcd8cf" />
          <path d={tile.sand} fill="#ecdfc0" />
          <path d={tile.water} fill="#96b8fa" />
          <path d={tile.streams} stroke="#96b8fa" strokeWidth="2" vectorEffect="non-scaling-stroke" />
          <path d={tile.trails} stroke="#c9c5bc" strokeWidth="2" vectorEffect="non-scaling-stroke" />
          <path d={tile.borders} stroke="#a5a5a3" strokeWidth="2" vectorEffect="non-scaling-stroke" />
        </g>
      ))}
      {/* Roads, narrow to wide */}
      {roadLayers.map((layer) => (
        <g key={layer.key} strokeLinecap="round" strokeLinejoin="round">
          {tiles.map((tile) => (
            <path key={tile.id} d={tile[layer.key]} transform={tile.transform} stroke={layer.casing} strokeWidth={layer.outer} vectorEffect="non-scaling-stroke" />
          ))}
          {layer.inner > 0 && tiles.map((tile) => (
            <path key={tile.id} d={tile[layer.key]} transform={tile.transform} stroke={layer.fill} strokeWidth={layer.inner} vectorEffect="non-scaling-stroke" />
          ))}
        </g>
      ))}
      {/* Airport */}
      <circle cx="759" cy="370" r="18" fill="#ffffff" />
      <path d="M757 360q2-4 4 0v9l12 8v3l-12-3v8h-4v-8l-12 3v-3l12-8Z" fill="#4fa8f5" />
      {/* District names */}
      {districtLabels.map((label) => (
        <text
          key={label.text}
          x={label.x}
          y={label.y}
          textAnchor="middle"
          fontSize={label.size}
          fontWeight="500"
          fill={label.color}
          stroke="#fbf8f4"
          strokeWidth="6"
          strokeLinejoin="round"
          paintOrder="stroke"
        >
          {label.text}
        </text>
      ))}
      {/* Track */}
      <g strokeWidth="16" strokeLinejoin="round">
        <path d="M209 581L181 580L142 578L136 536L160 527L167 490L171 450L210 409L241 413L306 435L342 416L389 396L420 385L467 349L513 343L554 349M597 341L638 275L664 251L695 228L719 227" stroke="#2a62ef" />
        <path d="M724 248V271L726 310L711 335L709 361L698 366M708 361H719L724 378L736 393L770 419L793 436L831 461L865 500H919L937 523" stroke="#2a62ef" />
        <path d="M567 353L597 338L638 275L664 251L695 226L719 224" stroke="#8519f7" />
      </g>
      {/* Start and finish */}
      <path d="M231 523h52q7 0 6 7l-5 39q-1 6-7 6h-54q-7 0-6-6l7-40q1-6 7-6Z" fill="#2f2f2f" stroke="#ffffff" strokeWidth="2" />
      <path d="M247 528h19l-2 14h18l-2 15h-18l-2 14h-21l3-14h-20l2-15h21Z" fill="#ffffff" />
      <path d="M245 542h19l-2 15h-19Z" fill="#2f2f2f" />
      <circle cx="209" cy="590" r="27" fill="#2f2f2f" stroke="#ffffff" strokeWidth="2" />
      <circle cx="209" cy="590" r="11" fill="#ffffff" />
      {/* Distance pins */}
      {distancePins.map((pin) => (
        <g key={pin.km}>
          <circle cx={pin.x} cy={pin.y} r="27" fill={pin.color} />
          {pin.km && (
            <text x={pin.x} y={pin.y + 9} textAnchor="middle" fontSize="28" fontWeight="500" fill="#ffffff">
              {pin.km}
            </text>
          )}
        </g>
      ))}
      <text x="20" y="775" fontFamily="Lato, sans-serif" fontSize="55" fontWeight="700" stroke="#ffffff" strokeOpacity="0.6" strokeWidth="10" strokeLinejoin="round" paintOrder="stroke">
        {logoLetters.map((letter, idx) => (
          <tspan key={idx} fill={letter.color}>{letter.char}</tspan>
        ))}
      </text>
    </svg>
  );
}

function MapPanel() {
  const [expanded, setExpanded] = useState(false);

  return (
    <section className="relative overflow-hidden rounded-b-[76px]">
      <RouteMap />

      {/* Weather and legend */}
      <div className="absolute left-6 top-6 text-black">
        <div className="flex h-14 items-center">
          <svg className="ml-[10px] h-[38px] w-[56px]" viewBox="0 0 56 38" aria-label="흐림">
            <path d="M11 37C-2 37-3 16 11 14q4-1 8 3C21-4 53-5 54 19c0 10-6 18-16 18Z" fill="#ffffff" />
            <path d="M25 9C32-1 53 1 54 19c0 8-5 15-12 17C36 31 38 16 25 9Z" fill="#f8f8f5" />
          </svg>
          <span className="ml-7 text-[48px] leading-none">22.0°C</span>
        </div>
        <div className="mt-[51px] flex h-14 items-center">
          <span className="ml-[2px] h-4 w-[45px] rounded-full border-2 border-[#3d3350] bg-[#5f13a8]" />
          <span className="ml-5 text-[39px] font-medium leading-none">가장 빠른 구간</span>
        </div>
      </div>

      {/* Map controls */}
      <div className="absolute right-5 top-[22px] flex flex-col gap-5">
        <button
          type="button"
          aria-label="지도 확대"
          aria-pressed={expanded}
          onClick={() => setExpanded(!expanded)}
          className="grid size-[120px] place-items-center rounded-full bg-white text-[#3c3c3c]"
        >
          <svg className="size-12" viewBox="0 0 48 48" fill="none" stroke="currentColor" strokeWidth="4" strokeLinecap="round" strokeLinejoin="round">
            <path d="M27 3h18v18M21 45H3V27M45 3L3 45" />
          </svg>
        </button>
        <button type="button" aria-label="지도 유형" className="grid size-[120px] place-items-center rounded-full bg-white text-[#3c3c3c]">
          <svg className="h-[54px] w-[52px]" viewBox="0 0 52 54" fill="none" stroke="currentColor" strokeWidth="3.500" strokeLinejoin="round">
            <path d="M26 3l24 14-24 14L2 17Z" />
            <path d="M6 25l-4 3 24 14 24-14-4-3" />
            <path d="M6 36l-4 3 24 13 24-13-4-3" />
          </svg>
        </button>
      </div>
    </section>
  );
}

function NavBar() {
  return (
    <nav className="grid h-[146px] grid-cols-3 items-center pl-[81px] pr-[93px] text-[#8c8c8c]">
      <button type="button" aria-label="최근 앱" className="justify-self-center">
        <svg className="h-13 w-[46px]" viewBox="0 0 46 52" fill="none" stroke="currentColor" strokeWidth="6" strokeLinecap="round">
          <path d="M4 5v42M23 5v42M42 5v42" />
        </svg>
      </button>
      <button type="button" aria-label="홈" className="justify-self-center">
        <svg className="size-13" viewBox="0 0 52 52" fill="none" stroke="currentColor" strokeWidth="6">
          <rect x="3" y="3" width="46" height="46" rx="15" />
        </svg>
      </button>
      <button type="button" aria-label="뒤로 가기" className="justify-self-center">
        <svg className="h-13 w-8" viewBox="0 0 32 52" fill="none" stroke="currentColor" strokeWidth="6" strokeLinecap="round">
          <path d="M27 5L6 26l21 21" />
        </svg>
      </button>
    </nav>
  );
}

export default function App() {
  return (
    <div className="min-h-screen bg-[#f1f1f1] font-['Roboto','Noto_Sans_CJK_KR',sans-serif]">
      <StatusBar />
      <TitleBar />

      <main>
        {/* Date and reward */}
        <section className="px-[77px] pt-[75px] text-[65px] leading-[91px]">
          <p className="text-[#252525]">8월 29일 (일)</p>
          <p className="text-[#656565]">오전 7:11 - 오전 11:23</p>
        </section>
        <div className="mt-8 flex pr-[62px]">
          <Medal />
        </div>

        {/* Summary */}
        <section className="mt-[83px] flex flex-col items-center rounded-t-[76px] bg-[#fcfcfc] pb-[75px] pt-[114px] font-medium text-[#252525]">
          <div className="flex items-baseline gap-5">
            <span className="text-[176px] leading-[224px]">59.52</span>
            <span className="text-[58px]">km</span>
          </div>
          <div className="flex items-center">
            <span className="text-[74px] leading-[112px]">03:13:01</span>
            <span className="mx-7 h-[46px] w-px bg-[#dedede]" />
            <div className="flex items-baseline gap-3">
              <span className="text-[74px] leading-[112px]">18.5</span>
              <span className="text-[50px]">km/h</span>
            </div>
          </div>
        </section>

        <MapPanel />

        {/* Top edge of the next card */}
        <div className="mx-[58px] mt-16 h-2 rounded-full bg-[#fcfcfc]" />
      </main>

      <NavBar />
    </div>
  );
}
